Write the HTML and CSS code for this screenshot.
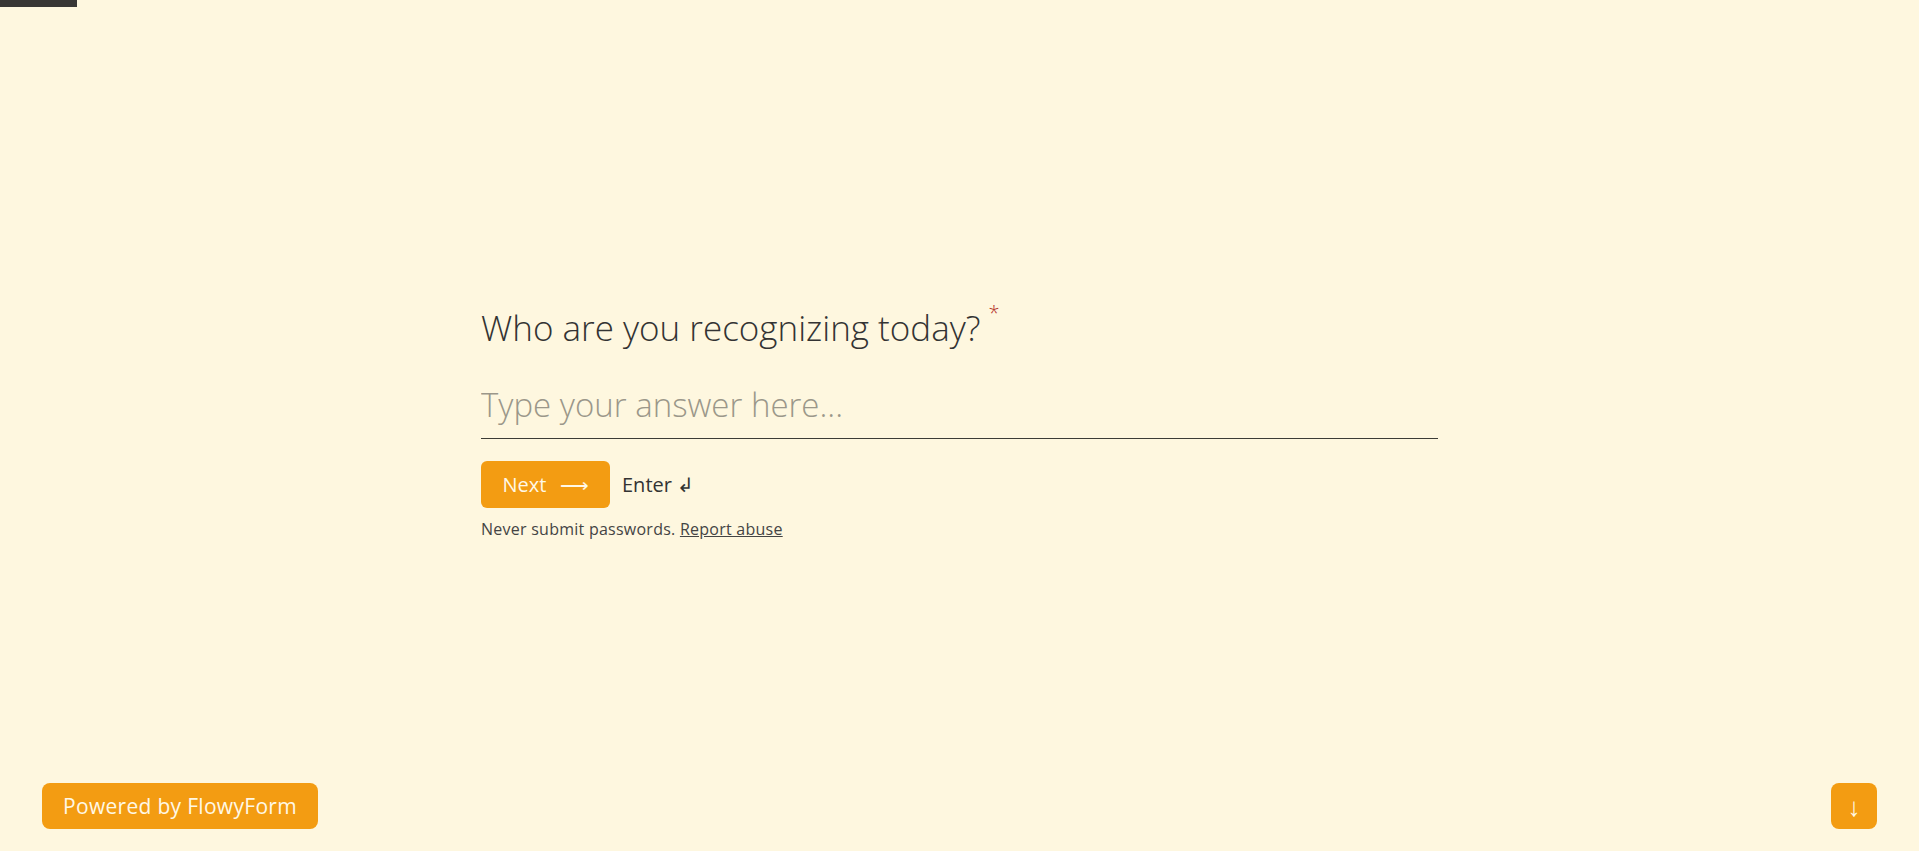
FILE: index.html
```html
<!DOCTYPE html>
<html lang="en">
<head>
  <meta charset="UTF-8" />
  <meta name="viewport" content="width=device-width, initial-scale=1.0"/>
  <title>Recognition</title>
  <link rel="stylesheet" href="styles.css">
</head>
<body>
  <div class="progress"><div class="progress-fill"></div></div>

  <main class="stage">
    <div class="question">
      <h1 class="title">Who are you recognizing today?<span class="required">*</span></h1>
      <input class="answer" type="text" placeholder="Type your answer here..." />
      <div class="actions">
        <button class="next">Next <span class="arrow">&#10230;</span></button>
        <span class="hint">Enter &#8626;</span>
      </div>
      <p class="notice">Never submit passwords. <a href="#">Report abuse</a></p>
    </div>
  </main>

  <a class="powered" href="#">Powered by FlowyForm</a>
  <button class="down">&#8595;</button>
</body>
</html>
```

FILE: styles.css
```css
body {
  font-family: "Open Sans", sans-serif;
  background-color: #fef7df;
  color: #333;
  margin: 0;
}

.progress {
  height: 7px;
}

.progress-fill {
  width: 77px;
  height: 7px;
  background-color: #383735;
}

.stage {
  display: flex;
  justify-content: center;
  padding-top: 299px;
}

.question {
  width: 957px;
}

.title {
  margin: 0;
  font-size: 35px;
  font-weight: 300;
  color: #333;
  line-height: 44px;
}

.required {
  color: #b5332b;
  font-size: 20px;
  vertical-align: top;
  margin-left: 8px;
  position: relative;
  top: -15px;
}

.answer {
  display: block;
  width: 100%;
  box-sizing: border-box;
  margin-top: 32px;
  padding: 0 0 11px;
  border: none;
  border-bottom: 1.5px solid #3c3c36;
  background: transparent;
  font-family: inherit;
  font-size: 33px;
  line-height: 45px;
  height: 57px;
  font-weight: 300;
  color: #333;
  outline: none;
}

.answer::placeholder {
  color: #9b978a;
}

.actions {
  display: flex;
  align-items: center;
  gap: 12px;
  margin-top: 22px;
}

.next {
  width: 129px;
  height: 47px;
  border: none;
  border-radius: 6px;
  background-color: #f39c12;
  color: #fff8e6;
  font-family: inherit;
  font-size: 20px;
  cursor: pointer;
}

.arrow {
  margin-left: 8px;
}

.hint {
  font-size: 20px;
  color: #333;
}

.notice {
  margin: 10px 0 0;
  font-size: 16px;
  letter-spacing: 0.25px;
  color: #444;
}

.notice a {
  color: #444;
}

.powered {
  position: fixed;
  left: 42px;
  bottom: 22px;
  width: 276px;
  height: 46px;
  line-height: 46px;
  text-align: center;
  border-radius: 8px;
  background-color: #f39c12;
  color: #fff8e6;
  font-size: 21px;
  letter-spacing: 0.3px;
  text-decoration: none;
}

.down {
  position: fixed;
  right: 42px;
  bottom: 22px;
  width: 46px;
  height: 46px;
  border: none;
  border-radius: 8px;
  background-color: #f39c12;
  color: #fff8e6;
  font-size: 26px;
  font-family: inherit;
}
```
